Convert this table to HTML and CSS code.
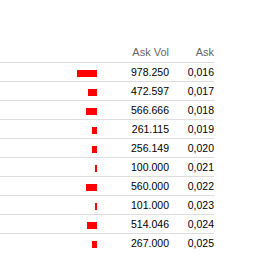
FILE: index.html
```html
<!DOCTYPE html>
<html>
<head>
    <title>Order Book</title>
    <link rel="stylesheet" href="styles.css">
</head>
<body>
    <table class="book">
        <thead>
            <tr>
                <th class="bar-col"></th>
                <th class="vol-col">Ask Vol</th>
                <th class="ask-col">Ask</th>
            </tr>
        </thead>
        <tbody>
            <tr><td class="bar-col"><span class="bar" style="width: 20px"></span></td><td class="vol-col">978.250</td><td class="ask-col">0,016</td></tr>
            <tr><td class="bar-col"><span class="bar" style="width: 9px"></span></td><td class="vol-col">472.597</td><td class="ask-col">0,017</td></tr>
            <tr><td class="bar-col"><span class="bar" style="width: 11px"></span></td><td class="vol-col">566.666</td><td class="ask-col">0,018</td></tr>
            <tr><td class="bar-col"><span class="bar" style="width: 5px"></span></td><td class="vol-col">261.115</td><td class="ask-col">0,019</td></tr>
            <tr><td class="bar-col"><span class="bar" style="width: 5px"></span></td><td class="vol-col">256.149</td><td class="ask-col">0,020</td></tr>
            <tr><td class="bar-col"><span class="bar" style="width: 2px"></span></td><td class="vol-col">100.000</td><td class="ask-col">0,021</td></tr>
            <tr><td class="bar-col"><span class="bar" style="width: 11px"></span></td><td class="vol-col">560.000</td><td class="ask-col">0,022</td></tr>
            <tr><td class="bar-col"><span class="bar" style="width: 2px"></span></td><td class="vol-col">101.000</td><td class="ask-col">0,023</td></tr>
            <tr><td class="bar-col"><span class="bar" style="width: 10px"></span></td><td class="vol-col">514.046</td><td class="ask-col">0,024</td></tr>
            <tr><td class="bar-col"><span class="bar" style="width: 5px"></span></td><td class="vol-col">267.000</td><td class="ask-col">0,025</td></tr>
        </tbody>
    </table>
</body>
</html>
```

FILE: styles.css
```css
body {
    margin: 0;
    padding-top: 42px;
    background: #fff;
    font-family: "Liberation Sans", Arial, sans-serif;
}
.book {
    width: 214px;
    border-collapse: collapse;
    table-layout: fixed;
}
.book th {
    height: 19px;
    padding: 0 0 1px 0;
    font-size: 11px;
    font-weight: normal;
    color: #666;
    text-align: right;
    vertical-align: middle;
}
.book td {
    height: 18px;
    padding: 0;
    border-top: 1px solid #ddd;
    font-size: 10.5px;
    color: #000;
    text-align: right;
    vertical-align: middle;
    line-height: 18px;
}
.bar-col {
    width: 97px;
}
.vol-col {
    width: 72px;
}
.ask-col {
    width: 45px;
}
.bar {
    display: inline-block;
    height: 7px;
    background: #f00;
    vertical-align: middle;
}
```
